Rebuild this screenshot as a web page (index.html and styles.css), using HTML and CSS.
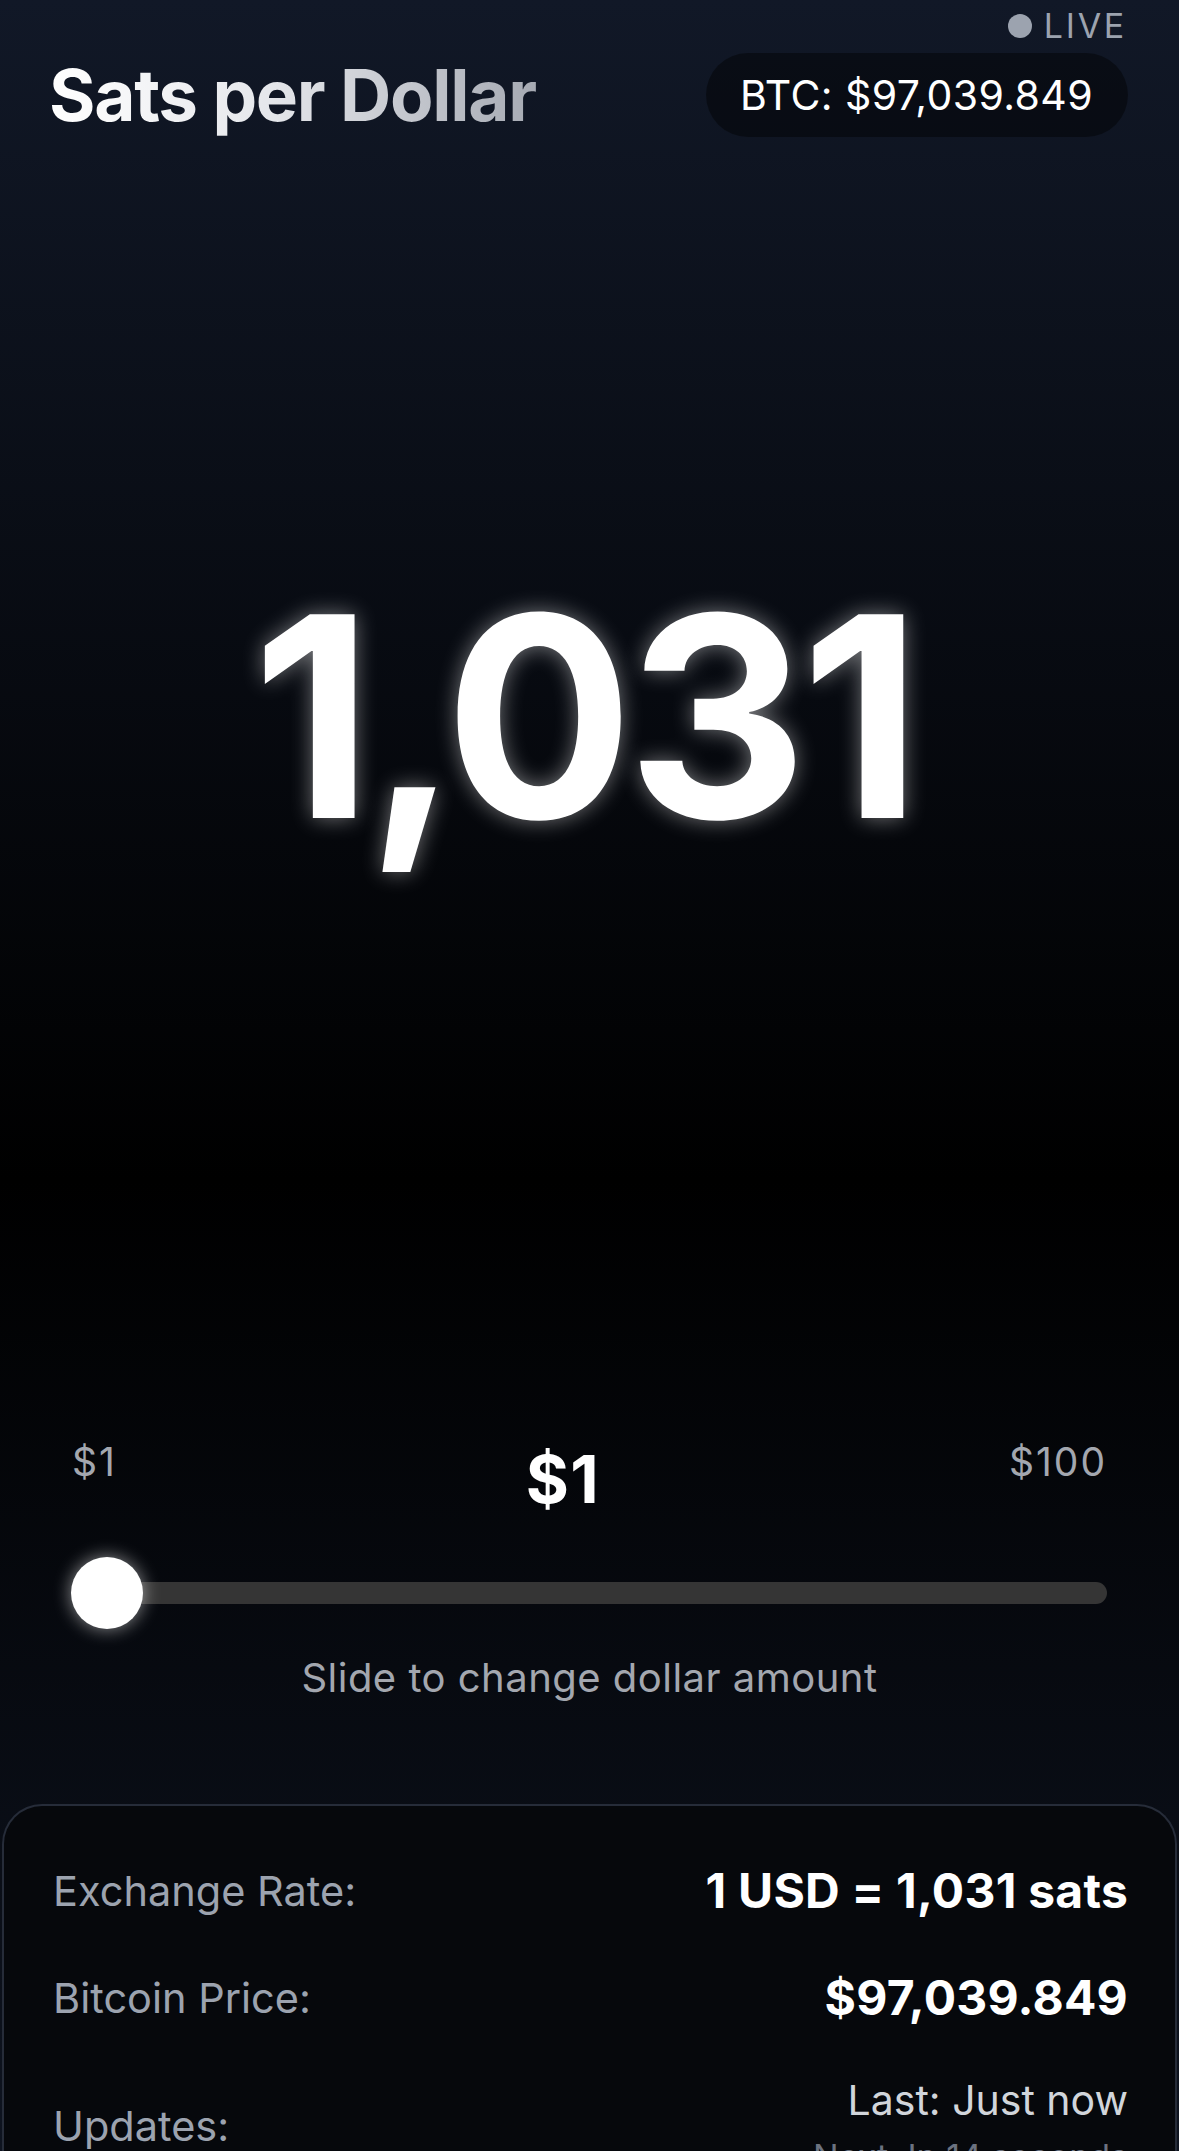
FILE: index.html
```html
<!DOCTYPE html>
<html lang="en">
<head>
<meta charset="utf-8">
<title>Sats per Dollar</title>
<link rel="stylesheet" href="styles.css">
</head>
<body>
<div class="page">
  <div class="live"><span class="live-dot"></span><span class="live-text">LIVE</span></div>
  <header class="header">
    <h1 class="title">Sats per Dollar</h1>
    <div class="pill">BTC: $97,039.849</div>
  </header>

  <section class="hero">
    <div class="sats">1,031</div>
  </section>

  <section class="slider">
    <div class="slider-labels">
      <span class="edge-label">$1</span>
      <span class="current">$1</span>
      <span class="edge-label">$100</span>
    </div>
    <div class="track-wrap">
      <div class="track"></div>
      <div class="thumb"></div>
    </div>
    <p class="hint">Slide to change dollar amount</p>
  </section>

  <section class="card">
    <div class="row">
      <span class="label">Exchange Rate:</span>
      <span class="value">1 USD = 1,031 sats</span>
    </div>
    <div class="row">
      <span class="label">Bitcoin Price:</span>
      <span class="value">$97,039.849</span>
    </div>
    <div class="row">
      <span class="label">Updates:</span>
      <div class="updates">
        <span class="last">Last: Just now</span>
        <span class="next">Next: In 14 seconds</span>
      </div>
    </div>
  </section>
</div>
</body>
</html>
```

FILE: styles.css
```css
html, body {
  margin: 0;
  padding: 0;
  background: #111827;
}

body {
  font-family: Inter, "Noto Sans", "Liberation Sans", sans-serif;
  color: #ffffff;
}

.page {
  position: relative;
  min-height: 2360px;
  background: linear-gradient(to bottom, #111827 0%, #000000 50%, #111827 100%);
  overflow: hidden;
}

.live {
  position: absolute;
  top: 9px;
  right: 52px;
  display: flex;
  align-items: center;
  gap: 12px;
  color: #9ca3af;
}

.live-dot {
  width: 24px;
  height: 24px;
  border-radius: 50%;
  background: #9ca3af;
}

.live-text {
  font-size: 34px;
  line-height: 34px;
  letter-spacing: 0.08em;
}

.header {
  display: flex;
  align-items: center;
  justify-content: space-between;
  padding: 53px 51px 0 49px;
  height: 84px;
}

.title {
  margin: 0;
  font-size: 71px;
  font-weight: 700;
  line-height: 84px;
  letter-spacing: -0.018em;
  background: linear-gradient(to right, #ffffff 0%, #e5e7eb 45%, #a6aab3 100%);
  -webkit-background-clip: text;
  background-clip: text;
  color: transparent;
}

.pill {
  height: 84px;
  box-sizing: border-box;
  padding: 0 35px 0 34px;
  display: flex;
  align-items: center;
  border-radius: 42px;
  background: rgba(0, 0, 0, 0.42);
  font-size: 41px;
  letter-spacing: 0.01em;
  color: #ffffff;
}

.hero {
  height: 1295px;
  box-sizing: border-box;
  padding-bottom: 136px;
  display: flex;
  align-items: center;
  justify-content: center;
}

.sats {
  font-size: 280px;
  font-weight: 700;
  line-height: 280px;
  letter-spacing: -0.024em;
  margin-right: 12px;
  color: #ffffff;
  text-shadow: 0 0 22px rgba(255, 255, 255, 0.45);
}

.slider {
  padding: 2px 72px 0 72px;
}

.slider-labels {
  display: flex;
  justify-content: space-between;
  align-items: flex-start;
}

.edge-label {
  font-size: 39px;
  line-height: 54px;
  letter-spacing: 0.05em;
  color: #a3a7af;
  margin-top: 1px;
}

.current {
  font-size: 66px;
  font-weight: 700;
  line-height: 90px;
  letter-spacing: 0.02em;
  color: #ffffff;
}

.track-wrap {
  position: relative;
  height: 72px;
  margin-top: 33px;
  display: flex;
  align-items: center;
}

.track {
  flex: 1;
  height: 22px;
  border-radius: 11px;
  background: #353535;
}

.thumb {
  position: absolute;
  left: -1px;
  top: 0;
  width: 72px;
  height: 72px;
  border-radius: 50%;
  background: #ffffff;
  box-shadow: 0 0 18px rgba(255, 255, 255, 0.55);
}

.hint {
  margin: 20px 0 0 0;
  text-align: center;
  font-size: 40px;
  line-height: 57px;
  letter-spacing: 0.012em;
  color: #a3a7af;
}

.card {
  margin: 98px 2px 0 2px;
  border: 2px solid #262c39;
  border-bottom: none;
  border-radius: 40px 40px 0 0;
  background: #06080c;
  padding: 50px 47px 60px 49px;
  display: flex;
  flex-direction: column;
  gap: 38px;
}

.row {
  display: flex;
  justify-content: space-between;
  align-items: center;
}

.label {
  font-size: 41.5px;
  line-height: 60px;
  color: #9ca3af;
}

.value {
  font-size: 48px;
  font-weight: 700;
  line-height: 69px;
  letter-spacing: 0.005em;
  color: #ffffff;
}

.updates {
  display: flex;
  flex-direction: column;
  align-items: flex-end;
}

.last {
  font-size: 41px;
  line-height: 61px;
  color: #d1d5db;
}

.next {
  font-size: 34px;
  line-height: 51px;
  color: #6b7280;
}
```
